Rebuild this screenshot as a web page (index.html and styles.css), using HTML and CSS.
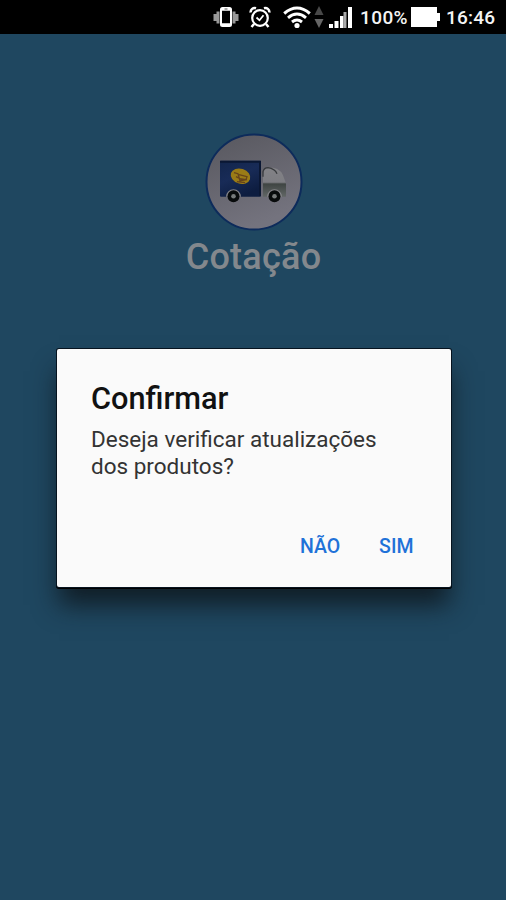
FILE: index.html
```html
<!DOCTYPE html>
<html lang="pt-BR">
<head>
    <meta charset="UTF-8">
    <meta name="viewport" content="width=device-width, initial-scale=1.0">
    <title>Cotação</title>
    <link rel="stylesheet" href="styles.css">
</head>
<body>
    <header class="status-bar">
        <svg class="icon-vibrate" width="26" height="22" viewBox="0 0 26 22">
            <path d="M2 8v7M5 5.500v12M21 5.500v12M24 8v7" stroke="#999" stroke-width="3"/>
            <rect x="8" y="2" width="10" height="18" rx="1.500" fill="#000" stroke="#fff" stroke-width="2"/>
            <path d="M8 3.500h10M8 18.500h10" stroke="#fff" stroke-width="2.500"/>
            <path d="M11.500 3h3" stroke="#555"/>
        </svg>
        <svg class="icon-alarm" width="22" height="22" viewBox="0 0 22 22" fill="none" stroke="#fff">
            <circle cx="11" cy="12" r="7.800" stroke-width="2.200"/>
            <path d="M7.500 11.500l3 2.800 4-5" stroke-width="1.800"/>
            <path d="M1.700 6.500a4 4 0 0 1 5.300-4.300M20.300 6.500a4 4 0 0 0-5.300-4.300M5 18l-2.500 3M17 18l2.500 3" stroke-width="2.500"/>
        </svg>
        <svg class="icon-wifi" width="28" height="24" viewBox="0 0 28 24" fill="none" stroke="#fff" stroke-width="3">
            <path d="M1.200 8.500q12.800-11 25.600 0M5 12.800q9-7.500 18 0M9 17q5-4 10 0"/>
            <circle cx="14" cy="20.500" r="2.600" fill="#fff" stroke="none"/>
        </svg>
        <svg class="icon-data" width="10" height="22" viewBox="0 0 10 22">
            <path d="M5 0l4.500 9h-9z" fill="#484848"/>
            <path d="M5 22l4.500-9h-9z" fill="#666"/>
        </svg>
        <svg class="icon-signal" width="24" height="21" viewBox="0 0 24 21" fill="#fff">
            <rect x="0" y="17" width="4" height="4"/>
            <rect x="5.500" y="14" width="4" height="7"/>
            <rect x="11" y="9" width="3.500" height="12"/>
            <rect x="14.500" y="5" width="3" height="16" fill="#aaa"/>
            <rect x="19" y="0" width="4" height="21"/>
        </svg>
        <span class="battery-level">100%</span>
        <svg class="icon-battery" width="29" height="20" viewBox="0 0 29 20" fill="#fff">
            <path d="M0 0h26v6h3v8h-3v6H0z"/>
        </svg>
        <span class="clock">16:46</span>
    </header>

    <main class="splash">
        <svg class="logo" width="98" height="98" viewBox="0 0 98 98">
            <defs>
                <linearGradient id="disc" x1="0" y1="0" x2=".4" y2="1">
                    <stop offset="0" stop-color="#57575e"/>
                    <stop offset="1" stop-color="#74737e"/>
                </linearGradient>
                <linearGradient id="box" x1="0" y1="0" x2=".5" y2="1">
                    <stop offset="0" stop-color="#12254b"/>
                    <stop offset=".5" stop-color="#182b57"/>
                    <stop offset="1" stop-color="#0d1d40"/>
                </linearGradient>
                <linearGradient id="cab" x1="0" y1="0" x2="0" y2="1">
                    <stop offset="0" stop-color="#828286"/>
                    <stop offset=".5" stop-color="#7d7d82"/>
                    <stop offset=".56" stop-color="#3f4543"/>
                    <stop offset="1" stop-color="#616665"/>
                </linearGradient>
            </defs>
            <circle cx="49" cy="49" r="47.500" fill="url(#disc)" stroke="#0d2b5b" stroke-width="2"/>
            <g transform="translate(0 .7)">
                <rect x="15" y="27" width="41" height="36" rx="1" fill="url(#box)"/>
                <path d="M15 28h40v34" fill="none" stroke="#0a1733" stroke-width="2"/>
                <ellipse cx="35.500" cy="42.500" rx="10" ry="7.500" fill="#9a7b16" transform="rotate(18 35.500 42.500)"/>
                <path d="M29 39l4 1 2 7 7-1M34 41l8 2-1 3-6-1M31 43l8 4M32 48l8 1" fill="none" stroke="#65431b" stroke-width="1.300"/>
                <path d="M58 63V40q1-6 6-6h4q9 1 12 13l1 3v13z" fill="url(#cab)"/>
                <path d="M58 43V38q1-4 5-4 7 1 9 6" fill="none" stroke="#383b3e" stroke-width="1.300"/>
                <path d="M21 63a7.500 7.500 0 0 1 15 0M62 63a7.500 7.500 0 0 1 15 0" fill="#858589"/>
                <circle cx="28.500" cy="62.500" r="6" fill="#080b0c"/>
                <circle cx="69.500" cy="62.500" r="6" fill="#080b0c"/>
                <circle cx="28.500" cy="62.500" r="2.300" fill="#777b7b"/>
                <circle cx="69.500" cy="62.500" r="2.300" fill="#777b7b"/>
            </g>
        </svg>
        <h1>Cotação</h1>
    </main>

    <div class="overlay">
        <div class="dialog" role="dialog">
            <h2>Confirmar</h2>
            <p>Deseja verificar atualizações dos produtos?</p>
            <div class="actions">
                <button>NÃO</button>
                <button>SIM</button>
            </div>
        </div>
    </div>
</body>
</html>
```
FILE: styles.css
```css
* {
    box-sizing: border-box;
}
body {
    margin: 0;
    height: 900px;
    overflow: hidden;
    background-color: #1f4760;
    font-family: Roboto, sans-serif;
}
.status-bar {
    display: flex;
    align-items: center;
    justify-content: flex-end;
    height: 34px;
    padding-right: 11px;
    background-color: #000;
    color: #f4f4f4;
    font-size: 19px;
    font-weight: 500;
    line-height: 34px;
    white-space: nowrap;
}
.status-bar svg {
    flex: none;
}
.icon-alarm {
    margin-left: 10px;
}
.icon-wifi {
    margin-left: 12px;
}
.icon-data {
    margin-left: 3px;
}
.icon-signal {
    margin-left: 5px;
}
.battery-level {
    width: 49px;
    margin-left: 7px;
    padding-top: 2px;
    letter-spacing: 0.4px;
}
.icon-battery {
    margin-left: 2px;
}
.clock {
    width: 49px;
    margin-left: 6px;
    padding-top: 2px;
    letter-spacing: 0.2px;
}
.splash {
    display: flex;
    flex-direction: column;
    align-items: center;
    padding: 99px 0 0 1px;
}
.logo {
    display: block;
}
h1 {
    margin: 5px 0 0;
    color: #83888d;
    font-size: 36px;
    font-weight: 500;
    line-height: 42px;
    letter-spacing: 0.25px;
}
.overlay {
    position: absolute;
    top: 0;
    left: 0;
    width: 100%;
    height: 100%;
    padding: 349px 55px 0 57px;
}
.dialog {
    height: 238px;
    padding: 32px 34px 0;
    border-radius: 2px;
    background-color: #fafafa;
    box-shadow: 0 0 0 1px #06131f, 0 1px 0 1px #000, 0 20px 24px -2px rgba(14, 22, 28, 0.85);
}
h2 {
    margin: 0;
    color: #111;
    font-size: 30.7px;
    font-weight: 500;
    line-height: 36px;
}
p {
    max-width: 300px;
    margin: 9px 0 0;
    color: #333;
    font-size: 22.5px;
    line-height: 27px;
}
.actions {
    display: flex;
    justify-content: flex-end;
    gap: 39px;
    margin-top: 55px;
    padding-right: 3.5px;
}
button {
    padding: 0;
    border: none;
    background: none;
    color: #1f72d8;
    font-family: inherit;
    font-size: 19.5px;
    font-weight: 500;
    line-height: 24px;
}
```
